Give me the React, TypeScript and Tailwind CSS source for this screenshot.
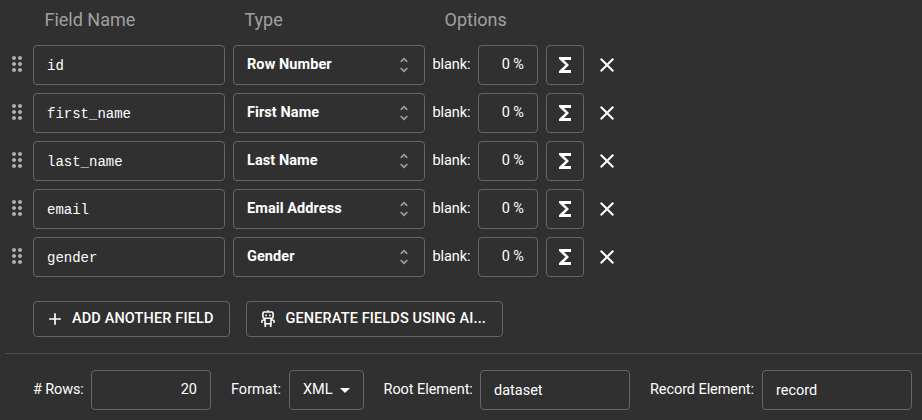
import type { ReactNode } from "react";

const fields = [
  { name: "id", type: "Row Number" },
  { name: "first_name", type: "First Name" },
  { name: "last_name", type: "Last Name" },
  { name: "email", type: "Email Address" },
  { name: "gender", type: "Gender" },
];

function Icon({ d, className }: { d: string; className: string }) {
  return (
    <svg viewBox="0 0 24 24" fill="currentColor" className={`shrink-0 ${className}`}>
      <path d={d} />
    </svg>
  );
}

const DRAG =
  "M11 18c0 1.1-.9 2-2 2s-2-.9-2-2 .9-2 2-2 2 .9 2 2m-2-8c-1.1 0-2 .9-2 2s.9 2 2 2 2-.9 2-2-.9-2-2-2m0-6c-1.1 0-2 .9-2 2s.9 2 2 2 2-.9 2-2-.9-2-2-2m6 4c1.1 0 2-.9 2-2s-.9-2-2-2-2 .9-2 2 .9 2 2 2m0 2c-1.1 0-2 .9-2 2s.9 2 2 2 2-.9 2-2-.9-2-2-2m0 6c-1.1 0-2 .9-2 2s.9 2 2 2 2-.9 2-2-.9-2-2-2";
const UNFOLD =
  "M12 5.83 15.17 9l1.41-1.41L12 3 7.41 7.59 8.83 9zm0 12.34L8.83 15l-1.41 1.41L12 21l4.59-4.59L15.17 15z";
const SIGMA = "M18 4H6v2l6.5 6L6 18v2h12v-3h-7l5-5-5-5h7z";
const CLOSE =
  "M19 6.41 17.59 5 12 10.59 6.41 5 5 6.41 10.59 12 5 17.59 6.41 19 12 13.41 17.59 19 19 17.59 13.41 12z";
const ADD = "M19 13h-6v6h-2v-6H5v-2h6V5h2v6h6v2z";

function Robot() {
  return (
    <svg viewBox="0 0 14 18" className="h-[18px] w-[14px] shrink-0" fill="none" stroke="currentColor">
      <path d="M7 .2V2" strokeWidth="1.4" />
      <rect x="1.9" y="2" width="10.2" height="6.2" rx="1.4" strokeWidth="1.6" />
      <path d="M4.3 5.4h1.5M8.2 5.4h1.5" strokeWidth="1.6" />
      <path d="M4 8.5v5.2h6V8.5M4 9.9H2L.9 11v2M10 9.9h2L13.1 11v2" strokeWidth="1.5" />
      <path d="M4.3 13.5V17M9.7 13.5V17" strokeWidth="1.7" />
    </svg>
  );
}

function Box({ className, children }: { className: string; children: ReactNode }) {
  return (
    <div className={`flex h-10 shrink-0 items-center rounded border border-[#666666] ${className}`}>
      {children}
    </div>
  );
}

export default function App() {
  return (
    <div className="h-[420px] w-[922px] overflow-hidden bg-[#303030] font-['Roboto',sans-serif] text-[14.5px] leading-5 text-white">
      <div className="flex h-[45px] pt-[8px] pl-[44.5px] text-[18px] leading-6 text-[#a0a0a0]">
        <div className="w-[200px]">Field Name</div>
        <div className="w-[200px]">Type</div>
        <div>Options</div>
      </div>
      <div className="flex flex-col gap-2">
        {fields.map((f) => (
          <div key={f.name} className="flex items-center pl-[5px]">
            <Icon d={DRAG} className="mr-1 mb-[2px] size-6 text-[#b0b0b0]" />
            <Box className="mr-2 w-48 px-[13px] pt-px font-['Courier_New','Liberation_Mono',monospace] text-[14px]">{f.name}</Box>
            <Box className="w-48 justify-between pr-[10px] pl-[13px] font-bold tracking-[0.08px]">
              <span>{f.type}</span>
              <Icon d={UNFOLD} className="size-5 text-[#a0a0a0]" />
            </Box>
            <div className="w-[53px] pl-[7.5px] tracking-[-0.1px]">blank:</div>
            <Box className="mr-2 w-[60px] justify-end pr-[13px]">0 %</Box>
            <Box className="w-[38px] justify-center">
              <Icon d={SIGMA} className="size-6" />
            </Box>
            <Icon d={CLOSE} className="ml-[11px] size-6" />
          </div>
        ))}
      </div>
      <div className="mt-6 flex gap-4 pl-[33px] font-medium tracking-[0.13px]">
        <div className="flex h-9 w-[197px] items-center rounded border border-[#666666] pl-[11px]">
          <Icon d={ADD} className="mr-[7px] size-5" />
          <span className="pb-px whitespace-nowrap">ADD ANOTHER FIELD</span>
        </div>
        <div className="flex h-9 w-[257px] items-center rounded border border-[#666666] pl-[14px]">
          <Robot />
          <span className="ml-[10.5px] pb-px whitespace-nowrap">GENERATE FIELDS USING AI...</span>
        </div>
      </div>
      <div className="mt-4 ml-[5px] h-px bg-[#4d4d4d]" />
      <div className="mt-4 flex items-center pl-[33px]">
        <div className="w-[58px] whitespace-nowrap tracking-[-0.15px]"># Rows:</div>
        <Box className="w-[120px] justify-end pr-[13px]">20</Box>
        <div className="ml-[20px] w-[58px]">Format:</div>
        <Box className="w-[75px] pl-[13px]">
          <span className="w-[28px]">XML</span>
          <svg viewBox="0 0 10 5" className="ml-[9px] h-[5px] w-[10px] shrink-0" fill="currentColor">
            <path d="M0 0h10L5 5z" />
          </svg>
        </Box>
        <div className="ml-[19.5px] w-[96.5px] whitespace-nowrap tracking-[-0.05px]">Root Element:</div>
        <Box className="w-[150px] pt-[2px] pl-[13px]">dataset</Box>
        <div className="ml-[20px] w-[112px] whitespace-nowrap tracking-[-0.08px]">Record Element:</div>
        <Box className="w-[150px] pt-[2px] pl-[13px]">record</Box>
      </div>
    </div>
  );
}
